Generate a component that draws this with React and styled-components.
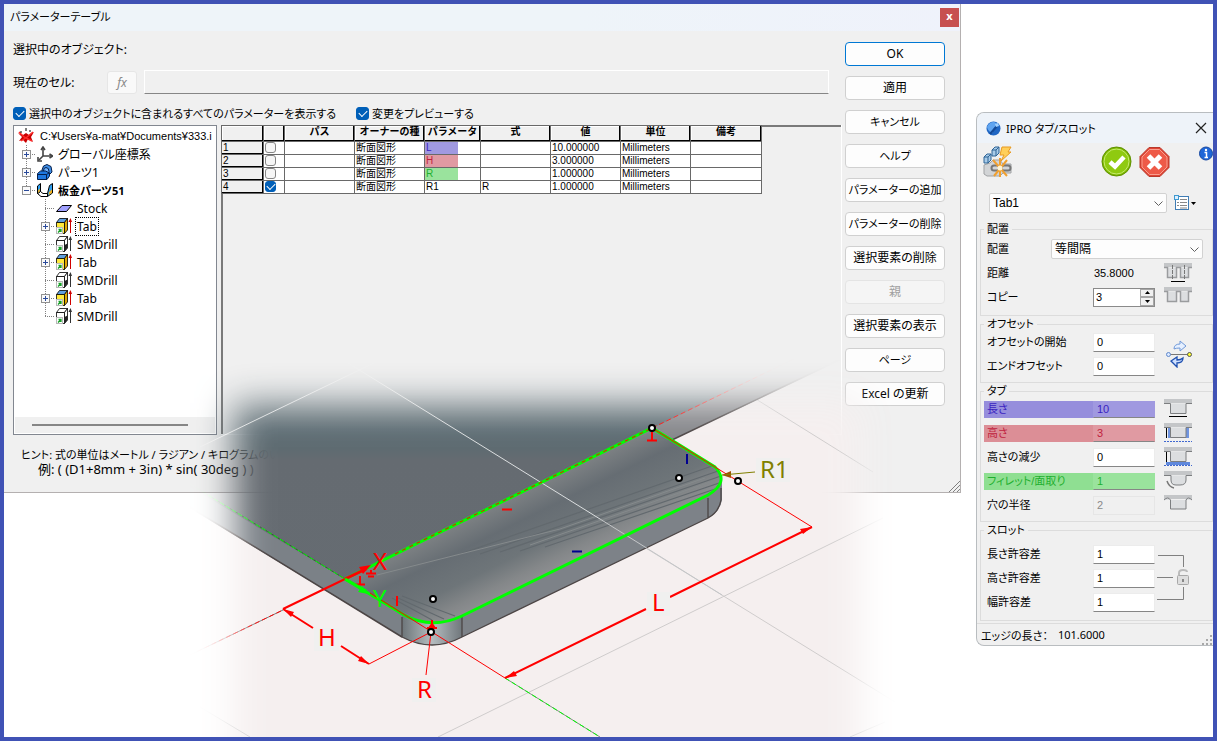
import React from 'react';
import styled, {createGlobalStyle} from 'styled-components';

const GlobalStyle = createGlobalStyle`
    * {
        box-sizing: border-box;
    }
    body {
        margin: 0;
        background: #fff;
        color: #000;
        font: 12px "Noto Sans", "Noto Sans CJK JP", sans-serif;
        font-feature-settings: "palt";
    }
    button, input, select {
        margin: 0;
        font: inherit;
        font-feature-settings: inherit;
        color: inherit;
    }
    svg {
        display: block;
        flex: none;
    }
`;

const Desktop = styled.main`
    position: relative;
    display: flex;
    align-items: flex-start;
    gap: 15px;
    min-height: 100vh;
    border: 4px solid #4052b5;
    overflow: hidden;
`;

/* Parameter table dialog */

const Dialog = styled.section`
    position: relative;
    flex: 1;
    min-width: 0;
    background: #f0f0f0;
    border: solid #b4b0b0;
    border-width: 0 1px 1px 0;
`;
const TitleBar = styled.header`
    display: flex;
    align-items: center;
    justify-content: space-between;
    height: 27px;
    padding: 0 1px 4px 6px;
    background: linear-gradient(90deg, #eef4f9 60%, #eff2fb);
`;
const Title = styled.h1`
    margin: 0;
    font-size: 11px;
    font-weight: 400;
`;
const CloseBox = styled.button`
    width: 19px;
    height: 19px;
    margin-top: 4px;
    padding: 0 0 3px;
    border: 0;
    background: #c75050;
    color: #fff;
    font-size: 11px;
    font-weight: 700;
    line-height: 14px;
`;
const DialogBody = styled.div`
    display: flex;
`;
const MainColumn = styled.div`
    flex: 1;
    min-width: 0;
    padding: 0 0 15px 9px;
`;
const Line = styled.div`
    display: flex;
    align-items: center;
    height: ${({$height}) => $height}px;
    padding-top: ${({$top}) => $top || 0}px;
`;
const CellLabel = styled.label`
    width: 94px;
`;
const FxButton = styled.button`
    width: 30px;
    height: 23px;
    margin-right: 7px;
    padding: 0;
    border: 1px solid #e6e6e6;
    border-radius: 3px;
    background: #f9f9f9;
    color: #8a8a8a;
    font-style: italic;
`;
const CellInput = styled.input`
    flex: 1;
    height: 24px;
    margin-right: 13px;
    border: 1px solid #fff;
    border-bottom-color: #868686;
    background: #f0f0f0;
`;
const CheckLabel = styled.label`
    display: flex;
    align-items: center;
    gap: 3px;
    font-size: 11px;
    &:first-child {
        width: 343px;
    }
`;
const Check = styled.input`
    appearance: none;
    display: grid;
    place-items: center;
    flex: none;
    width: ${({$size}) => $size || 13}px;
    height: ${({$size}) => $size || 13}px;
    border: 1px solid #868686;
    border-radius: 3px;
    background: #f6f6f6;
    &:checked {
        border-color: #005fb8;
        background: #005fb8;
    }
    &:checked::after {
        content: "";
        width: 7px;
        height: 4px;
        margin-bottom: 2px;
        border: solid #fff;
        border-width: 0 0 1px 1px;
        transform: rotate(-45deg);
    }
`;
const Panes = styled.div`
    display: flex;
    gap: 4px;
    height: 310px;
`;
const TreePane = styled.div`
    display: flex;
    flex-direction: column;
    width: 204px;
    padding: 1px;
    border: 1px solid #828790;
    background: #fff;
`;
const Tree = styled.ul`
    flex: 1;
    margin: 0;
    padding: 0;
    list-style: none;
    overflow: hidden;
`;
const TreeRow = styled.li`
    display: flex;
    align-items: center;
    height: 18px;
    padding-left: ${({$level}) => [2, 7, 26][$level]}px;
    font-family: ${({$level}) => $level === 0 ? '"Liberation Sans", sans-serif' : 'inherit'};
    font-weight: ${({$bold}) => $bold ? 700 : 400};
    font-size: ${({$bold, $level}) => $bold || $level === 0 ? 11 : 12}px;
    white-space: nowrap;
`;
const TreeText = styled.span`
    margin-left: 4px;
    padding: 0 1px;
    line-height: 17px;
    outline: ${({$focus}) => $focus ? '1px dotted #000' : 'none'};
`;
const Toggle = styled.button`
    padding: 0;
    border: 0;
    background: none;
`;
const ScrollTrack = styled.div`
    height: 16px;
    padding: 7px 27px 7px 17px;
    background: #f0f0f0;
`;
const ScrollThumb = styled.div`
    height: 2px;
    background: #868686;
`;
const SheetPane = styled.div`
    flex: 1;
    min-width: 0;
    border: solid #fff;
    border-width: 0 1px 1px 0;
    box-shadow: inset 2px 2px 0 #7a7a7a;
`;
const Sheet = styled.table`
    width: 540px;
    border-collapse: collapse;
    table-layout: fixed;
    font: 10px "Liberation Sans", "Noto Sans CJK JP", sans-serif;
    font-feature-settings: normal;
    line-height: 11px;
    th, td {
        height: 13px;
        padding: 0 1px;
        border: 1px solid #696969;
        overflow: hidden;
        white-space: nowrap;
        text-align: left;
        vertical-align: top;
        background: #fff;
        font-size: 10px;
    }
    thead th {
        height: 16px;
        padding: 0;
        text-align: center;
        font-weight: 700;
        background: #f0f0f0;
        box-shadow: inset -1px -1px 0 #000, inset 1px 1px 0 #fff;
    }
    tbody th {
        font-weight: 400;
        background: #f0f0f0;
        box-shadow: inset -1px -1px 0 #000;
    }
`;
const Mark = styled.span`
    display: block;
    width: 33px;
    height: 12px;
    margin-left: -1px;
    padding-left: 1px;
    color: ${({$tone}) => tones[$tone].text};
    background: ${({$tone}) => tones[$tone].fill};
`;
const Hint = styled.p`
    margin: 12px 0 0 8px;
    line-height: 15px;
    font-size: 11px;
    white-space: nowrap;
    span {
        display: block;
        padding-left: 17px;
        font-size: 13px;
    }
`;
const ButtonColumn = styled.div`
    display: flex;
    flex-direction: column;
    gap: 10px;
    width: 118px;
    padding: 11px 15px 0 3px;
`;
const PushButton = styled.button`
    height: 24px;
    padding: 0;
    border: 1px solid ${({$primary}) => $primary ? '#0078d4' : '#d0d0d0'};
    border-radius: 4px;
    background: #fdfdfd;
    font-size: ${({$small}) => $small ? 11 : 12}px;
    line-height: 20px;
    white-space: nowrap;
    &:disabled {
        background: #f5f5f5;
        border-color: #e4e4e4;
        color: #a0a0a0;
    }
`;
const Grip = styled.svg`
    position: absolute;
    right: 0;
    bottom: 0;
`;

/* Tab / slot panel */

const Panel = styled.section`
    position: relative;
    flex: none;
    width: 237px;
    margin-top: 108px;
    border: solid #b9bdc0;
    border-width: 1px 0 1px 1px;
    border-radius: 8px 0 0 8px;
    background: #f0f0f0;
    overflow: hidden;
    font-family: "Liberation Sans", "Noto Sans CJK JP", sans-serif;
`;
const PanelTitle = styled.header`
    display: flex;
    align-items: center;
    gap: 5px;
    height: 30px;
    padding: 0 6px 0 9px;
    background: #eef3f9;
    h1 {
        flex: 1;
        font-family: "Noto Sans", "Noto Sans CJK JP", sans-serif;
    }
`;
const IconButton = styled.button`
    padding: 0;
    border: 0;
    background: none;
`;
const ToolBar = styled.div`
    display: flex;
    align-items: flex-start;
    gap: 7px;
    height: 50px;
    padding: 3px 0 0 6px;
    > :first-child {
        margin-right: auto;
    }
    > :last-child {
        margin-left: 22px;
    }
`;
const SelectLine = styled.div`
    display: flex;
    align-items: center;
    gap: 7px;
    height: 20px;
    margin-bottom: 10px;
    padding: 0 16px 0 12px;
`;
const SelectBox = styled.div`
    position: relative;
    flex: 1;
    select {
        appearance: none;
        display: block;
        width: 100%;
        height: 20px;
        padding: 0 3px;
        border: 1px solid #d2d2d2;
        border-radius: 2px;
        background: #fdfdfd;
        line-height: 16px;
    }
    svg {
        position: absolute;
        right: 4px;
        top: 8px;
        pointer-events: none;
    }
`;
const Group = styled.fieldset`
    min-width: 0;
    margin: 0 0 2px 3px;
    padding: ${({$top}) => $top || 0}px 0 ${({$bottom}) => $bottom || 4}px 3px;
    border: 1px solid #dcdcdc;
    legend {
        padding: 0 3px;
        font-size: 11px;
        line-height: 12px;
    }
`;
const GroupBody = styled.div`
    display: flex;
    align-items: center;
`;
const FieldRow = styled.div`
    display: flex;
    align-items: center;
    height: 24px;
    padding-right: ${({$wide}) => $wide ? 9 : 0}px;
    > svg {
        margin-left: 9px;
    }
`;
const FieldLabel = styled.label`
    flex: none;
    width: ${({$wide}) => $wide ? 67 : 109}px;
    height: 17px;
    padding-left: 3px;
    font-size: 11px;
    line-height: 16px;
    white-space: nowrap;
    color: ${({$tone}) => $tone ? tones[$tone].text : '#000'};
    background: ${({$tone}) => $tone ? tones[$tone].label : 'none'};
`;
const NumberInput = styled.input`
    width: 62px;
    height: ${({$tone}) => $tone ? 17 : 19}px;
    padding: 0 3px;
    border: 1px solid ${({$tone}) => $tone ? tones[$tone].fill : '#ececec'};
    border-bottom-color: #868686;
    background: ${({$tone}) => $tone ? tones[$tone].fill : '#fff'};
    color: ${({$tone}) => $tone ? tones[$tone].text : '#000'};
    font-size: 11px;
    &:disabled {
        background: #f0f0f0;
        border-color: #e6e6e6;
        color: #8a8a8a;
    }
`;
const ReadOut = styled.output`
    width: 62px;
    padding-left: 1px;
    font-size: 11px;
`;
const Spinner = styled.div`
    display: flex;
    width: 62px;
    height: 19px;
    border: 1px solid #8a8a8a;
    background: #fff;
    input {
        flex: 1;
        min-width: 0;
        padding: 0 2px;
        border: 0;
        font-size: 11px;
    }
`;
const SpinButtons = styled.div`
    display: flex;
    flex-direction: column;
    width: 14px;
    button {
        display: grid;
        place-items: center;
        flex: 1;
        padding: 0;
        border: 1px solid #a6a6a6;
        background: #f0f0f0;
    }
`;
const StatusBar = styled.footer`
    display: flex;
    align-items: center;
    gap: 10px;
    height: 22px;
    padding-left: 4px;
    border-top: 1px solid #dcdcdc;
    font-size: 11px;
    font-family: "Noto Sans", "Noto Sans CJK JP", sans-serif;
`;

const Scene = styled.svg`
    position: absolute;
    left: -4px;
    top: -4px;
    pointer-events: none;
    text {
        font: 24px "Noto Sans", sans-serif;
    }
`;

const tones = {
    blue: {text: '#3a1fc0', label: '#968edc', fill: '#a099e0'},
    red: {text: '#c01f3f', label: '#dc8e96', fill: '#e09aa2'},
    green: {text: '#1fb02f', label: '#8fdf92', fill: '#9ae39d'}
};

const treeItems = [
    {level: 1, name: 'グローバル座標系', icon: 'axes', toggle: '+'},
    {level: 1, name: 'パーツ1', icon: 'part', toggle: '+'},
    {level: 1, name: '板金パーツ51', icon: 'sheet', toggle: '-', bold: true, last: true},
    {level: 2, name: 'Stock', icon: 'stock'},
    {level: 2, name: 'Tab', icon: 'tab', toggle: '+', focus: true},
    {level: 2, name: 'SMDrill', icon: 'drill'},
    {level: 2, name: 'Tab', icon: 'tab', toggle: '+'},
    {level: 2, name: 'SMDrill', icon: 'drill'},
    {level: 2, name: 'Tab', icon: 'tab', toggle: '+'},
    {level: 2, name: 'SMDrill', icon: 'drill', last: true}
];

const columns = [42, 21, 70, 70, 56, 70, 70, 70, 71];
const headings = ['', '', 'パス', 'オーナーの種', 'パラメータ', '式', '値', '単位', '備考'];
const parameters = [
    {name: 'L', tone: 'blue', formula: '', value: '10.000000'},
    {name: 'H', tone: 'red', formula: '', value: '3.000000'},
    {name: 'R', tone: 'green', formula: '', value: '1.000000'},
    {name: 'R1', formula: 'R', value: '1.000000', checked: true}
];

const buttons = [
    {name: 'OK', primary: true},
    {name: '適用'},
    {name: 'キャンセル', small: true},
    {name: 'ヘルプ', small: true},
    {name: 'パラメーターの追加', small: true},
    {name: 'パラメーターの削除', small: true},
    {name: '選択要素の削除'},
    {name: '親', disabled: true},
    {name: '選択要素の表示'},
    {name: 'ページ', small: true},
    {name: 'Excel の更新'}
];

const Branch = ({toggle, last}) => (
    <svg width="15" height="18">
        <path d={`M4.5 0V${last ? 9 : 18}M4 9.5H14`} stroke="#808080" strokeDasharray="1 1" fill="none"/>
        {toggle && <g>
            <rect x="0.5" y="5.5" width="8" height="8" fill="#fafafa" stroke="#919191"/>
            <path d={toggle === '+' ? 'M2 9.5H7M4.5 7V12' : 'M2 9.5H7'} stroke="#2a4a9a"/>
        </g>}
    </svg>
);

const Block = ({color}) => (
    <svg width="16" height="16">
        <path d="M0.5 4.5L3.5 0.5H11.5L8.5 4.5Z" fill={color ? '#5f9fe0' : '#fff'} stroke="#000" strokeWidth="0.8"/>
        <path d="M8.5 4.5L11.5 0.5V12L8.5 15.5Z" fill={color ? '#e0a800' : '#fff'} stroke="#000" strokeWidth="0.8"/>
        {!color && <path d="M8.5 9L11.5 7.5V12L8.5 15.5Z" fill="#222"/>}
        <path d="M0.5 4.5H8.5V15.5H0.5Z" fill={color ? '#ffe93c' : '#fff'} stroke="#000" strokeWidth="0.8"/>
        <rect x="0.5" y="9.5" width="6" height="6" fill="#fff" stroke="#b8b8b8"/>
        <path d="M2 14.5L5 11.5M2.5 11.5H5V14" stroke="#18a028" strokeWidth="1.3" fill="none"/>
        <path d="M14.5 3V15" stroke={color ? '#d00000' : '#333'}/>
        <path d="M12.5 4L14.5 0L16 4Z" fill={color ? '#d00000' : '#333'}/>
    </svg>
);

const TreeIcon = ({icon}) => {
    if (icon === 'tab') return <Block color/>;
    if (icon === 'drill') return <Block/>;
    return (
        <svg width="16" height="16">
            {icon === 'axes' && <g stroke="#444" strokeWidth="1.6" fill="none">
                <path d="M6 2V10H15M6 10L2 14"/>
                <path d="M4 4L6 1L8 4M12.5 8L15.5 10L12.5 12M1 11V15H5"/>
            </g>}
            {icon === 'part' && <g stroke="#041e4a" strokeLinejoin="round">
                <path d="M5 6L6.5 2L10 0.5L14 2.5L15 8L12 11L5 9Z" fill="#3f8fe8"/>
                <path d="M6.5 7Q6.5 3.5 9 3.5Q12 3.5 12 7.5V9H6.5Z" fill="#6fb2ff"/>
                <path d="M0.5 9.5L3.5 7H8.5L12.5 9V12L10 15.5H0.5Z" fill="#1f78e0"/>
                <path d="M0.5 10.5H9.5V15M9.5 10.5L12 9" fill="none"/>
            </g>}
            {icon === 'sheet' && <g strokeLinejoin="round">
                <path d="M3.5 9.5L6 11.5H10.5V14.5H4L0.5 11.5Z" fill="#fff" stroke="#000"/>
                <path d="M0.5 4L3.5 1.5V9.5L0.5 11.5Z" fill="#30a0f0" stroke="#000"/>
                <path d="M1 8.5L3 6.5V9L1 11Z" fill="#f0b020"/>
                <path d="M15.5 1.5L12.5 3.5L10.5 11.5V14.5L15.5 11Z" fill="#30a0f0" stroke="#000"/>
                <path d="M12 10L15 7.5V11L11.5 13Z" fill="#f0b020"/>
            </g>}
            {icon === 'stock' && <path d="M0.5 11.5L6 5.5H15.5L10.5 11.5Z" fill="#a0a0ff" stroke="#000"/>}
        </svg>
    );
};

const ParameterDialog = () => (
    <Dialog>
        <TitleBar>
            <Title>パラメーターテーブル</Title>
            <CloseBox type="button" aria-label="閉じる">x</CloseBox>
        </TitleBar>
        <DialogBody>
            <MainColumn>
                <Line $height={36}>選択中のオブジェクト:</Line>
                <Line $height={30}>
                    <CellLabel htmlFor="cell">現在のセル:</CellLabel>
                    <FxButton type="button">fx</FxButton>
                    <CellInput id="cell" type="text"/>
                </Line>
                <Line $height={28} $top={4}>
                    <CheckLabel>
                        <Check type="checkbox" defaultChecked/>
                        選択中のオブジェクトに含まれるすべてのパラメーターを表示する
                    </CheckLabel>
                    <CheckLabel>
                        <Check type="checkbox" defaultChecked/>
                        変更をプレビューする
                    </CheckLabel>
                </Line>
                <Panes>
                    <TreePane>
                        <Tree>
                            <TreeRow $level={0}>
                                <svg width="18" height="16">
                                    <path d="M1 5L6 7L9 5L12 7L17 4L14 9L16 14L11 11L9 15L6 12L2 13L5 9Z" fill="#c80000"/>
                                    <path d="M2 4L7 9L15 13M16 4L10 9L4 13" stroke="#ff2a2a" strokeWidth="1.5" fill="none"/>
                                    <path d="M4 3V5M9 0V3M13 2V4" stroke="#000"/>
                                </svg>
                                <TreeText>C:¥Users¥a-mat¥Documents¥333.i</TreeText>
                            </TreeRow>
                            {treeItems.map((item, i) => <TreeRow key={i} $level={item.level} $bold={item.bold}>
                                {item.toggle
                                    ? <Toggle type="button" aria-label={item.name}><Branch {...item}/></Toggle>
                                    : <Branch {...item}/>}
                                <TreeIcon icon={item.icon}/>
                                <TreeText $focus={item.focus}>{item.name}</TreeText>
                            </TreeRow>)}
                        </Tree>
                        <ScrollTrack><ScrollThumb/></ScrollTrack>
                    </TreePane>
                    <SheetPane>
                        <Sheet>
                            <colgroup>
                                {columns.map((width, i) => <col key={i} width={width}/>)}
                            </colgroup>
                            <thead>
                                <tr>{headings.map((name, i) => <th key={i}>{name}</th>)}</tr>
                            </thead>
                            <tbody>
                                {parameters.map((p, i) => <tr key={p.name}>
                                    <th>{i + 1}</th>
                                    <td><Check $size={11} type="checkbox" aria-label={p.name} defaultChecked={p.checked}/></td>
                                    <td/>
                                    <td>断面図形</td>
                                    <td>{p.tone ? <Mark $tone={p.tone}>{p.name}</Mark> : p.name}</td>
                                    <td>{p.formula}</td>
                                    <td>{p.value}</td>
                                    <td>Millimeters</td>
                                    <td/>
                                </tr>)}
                            </tbody>
                        </Sheet>
                    </SheetPane>
                </Panes>
                <Hint>
                    ヒント: 式の単位はメートル / ラジアン / キログラムのいずれかです
                    <span>例: ( (D1+8mm + 3in) * sin( 30deg ) )</span>
                </Hint>
            </MainColumn>
            <ButtonColumn>
                {buttons.map(b => <PushButton key={b.name} type="button" $primary={b.primary} $small={b.small} disabled={b.disabled}>
                    {b.name}
                </PushButton>)}
            </ButtonColumn>
        </DialogBody>
        <Grip width="12" height="12">
            <path d="M1 12L12 1M5 12L12 5M9 12L12 9" stroke="#808080"/>
        </Grip>
    </Dialog>
);

const Chevron = () => (
    <svg width="9" height="5"><path d="M0.5 0.5L4.5 4.5L8.5 0.5" stroke="#606060" fill="none"/></svg>
);

const TabIcon = ({kind}) => {
    const double = kind === 'distance' || kind === 'copy';
    return (
        <svg width="28" height="20">
            <rect width="28" height="4" fill="#c4c6c8"/>
            {double ? <g>
                <path d="M0 4.5H3.5V14.5H12.5V4.5H16.5V14.5H24.5V4.5H28" fill="#dcdee0" stroke="#9a9c9e" strokeWidth="1.5"/>
                {kind === 'distance' && <g stroke="#777">
                    <path d="M8.5 2V16M20.5 2V16" strokeDasharray="4 1"/>
                    <path d="M7 18.5H21" stroke="#000"/>
                </g>}
            </g> : <g>
                {kind === 'height' && <g>
                    <path d="M4 5H7V15H4ZM21 5H25V15H21Z" fill="#6f94e0"/>
                    <path d="M0 18.5H28" stroke="#4068d0" strokeDasharray="2 1"/>
                    <path d="M2.5 5V15" stroke="#000"/>
                </g>}
                {kind === 'reduce' && <path d="M2 15H26V18H2Z" fill="#5f88dc"/>}
                {kind === 'fillet'
                    ? <path d="M0 4.5H7V9Q7 14 12 14H16Q22 14 22 9V4.5H28" fill="#dcdee0" stroke="#7c7e80"/>
                    : <path d={kind === 'hole' ? 'M0 5Q4 1 6.5 5V14H22V5Q24 1 28 5' : 'M0 4.5H6.5V14.5H22V4.5H28'} fill="#dcdee0" stroke="#7c7e80"/>}
                {kind === 'length' && <path d="M5 17.5H23" stroke="#000"/>}
                {kind === 'reduce' && <g>
                    <path d="M2.5 5V15" stroke="#000"/>
                    <path d="M0 18.5H28" stroke="#4068d0" strokeDasharray="2 1"/>
                </g>}
                {kind === 'fillet' && <path d="M3 10Q5 16 10 17" stroke="#777" strokeWidth="1.5" fill="none"/>}
            </g>}
        </svg>
    );
};

const NumberField = ({id, label, value, tone, disabled, icon}) => (
    <FieldRow>
        <FieldLabel htmlFor={id} $tone={tone}>{label}</FieldLabel>
        <NumberInput id={id} type="text" defaultValue={value} $tone={tone} disabled={disabled}/>
        {icon && <TabIcon kind={icon}/>}
    </FieldRow>
);

const SlotPanel = () => (
    <Panel>
        <PanelTitle>
            <svg width="15" height="15">
                <circle cx="7.5" cy="7.5" r="7" fill="#1f66c4"/>
                <path d="M1 6Q3 1 8 1Q12 2 10 5Q6 8 7 12Q2 11 1 6Z" fill="#5fa4f0"/>
                <path d="M4 13L11 5" stroke="#134a98" strokeWidth="2"/>
                <path d="M9 3L12 2L13 5L10 6Z" fill="#9fd0ff"/>
            </svg>
            <Title>IPRO タブ/スロット</Title>
            <IconButton type="button" aria-label="閉じる">
                <svg width="12" height="12"><path d="M1 1L11 11M11 1L1 11" stroke="#222" strokeWidth="1.2"/></svg>
            </IconButton>
        </PanelTitle>
        <ToolBar>
            <svg width="30" height="32">
                <path d="M1 19L7 17L10 14H17L20 18H28V27H20L17 30H4L1 28Z" fill="#d2d4d6" stroke="#a0a2a4"/>
                <path d="M1 11L4 8H8V14L5 17H1ZM9 4L12 1H16V7L13 10H9Z" fill="#a8cbe8" stroke="#2f6496"/>
                <path d="M1 11H5L8 8M5 11V17M9 4H13L16 1M13 4V10" stroke="#2f6496" fill="none"/>
                <path d="M19 1H28L25 6H28L18 15L21 9H17Z" fill="#ffcf5a" stroke="#e89a20"/>
                <rect x="8.5" y="19.5" width="8" height="5" rx="2.5" fill="none" stroke="#777" strokeWidth="2"/>
                <rect x="18.5" y="19.5" width="9" height="5" rx="2.5" fill="none" stroke="#777" strokeWidth="2"/>
                <path d="M17 12V31M10 14L24 30M24 14L11 30" stroke="#f0a030" strokeWidth="2"/>
                <circle cx="17" cy="22" r="2.5" fill="#fff3d0"/>
            </svg>
            <IconButton type="button" aria-label="OK">
                <svg width="31" height="32">
                    <circle cx="15.5" cy="15.5" r="14.5" fill="#7db800" stroke="#5f9000"/>
                    <circle cx="15.5" cy="15.5" r="12.5" fill="#8fca10" stroke="#c8ec70"/>
                    <path d="M9 16L14 20.5L23 11" stroke="#fff" strokeWidth="4.5" fill="none"/>
                </svg>
            </IconButton>
            <IconButton type="button" aria-label="キャンセル">
                <svg width="31" height="32">
                    <path d="M10 1.5H21L30 10.5V21.5L21 30.5H10L1 21.5V10.5Z" fill="#e04434" stroke="#b83a2c"/>
                    <path d="M10.5 3.5H20.5L28 11V21L20.5 28.5H10.5L3 21V11Z" fill="#ee5a48" stroke="#f8a090"/>
                    <path d="M9.5 10L21.5 22M21.5 10L9.5 22" stroke="#fff" strokeWidth="5"/>
                </svg>
            </IconButton>
            <IconButton type="button" aria-label="情報">
                <svg width="14" height="15">
                    <circle cx="7" cy="7.5" r="6.5" fill="#1e66d8" stroke="#1748a0"/>
                    <path d="M5.5 6.5H7.5V11M5.5 11.5H9" stroke="#fff" strokeWidth="1.5" fill="none"/>
                    <circle cx="7" cy="4" r="1.2" fill="#fff"/>
                </svg>
            </IconButton>
        </ToolBar>
        <SelectLine>
            <SelectBox>
                <select aria-label="フィーチャー"><option>Tab1</option></select>
                <Chevron/>
            </SelectBox>
            <IconButton type="button" aria-label="リスト">
                <svg width="23" height="16">
                    <rect x="1.5" y="1.5" width="13" height="13" fill="#fff" stroke="#3f7cb4"/>
                    <path d="M6 4.5H13M6 7.5H13M6 10.5H13M6 13H13M3 7.5H5M3 10.5H5" stroke="#888"/>
                    <rect x="0.5" y="0.5" width="4" height="4" fill="#dff0ff" stroke="#3f9ad0"/>
                    <path d="M17 7H22L19.5 10Z" fill="#000"/>
                </svg>
            </IconButton>
        </SelectLine>
        <Group $top={2} $bottom={6}>
            <legend>配置</legend>
            <FieldRow $wide>
                <FieldLabel htmlFor="layout" $wide>配置</FieldLabel>
                <SelectBox>
                    <select id="layout"><option>等間隔</option></select>
                    <Chevron/>
                </SelectBox>
            </FieldRow>
            <FieldRow>
                <FieldLabel as="span">距離</FieldLabel>
                <ReadOut>35.8000</ReadOut>
                <TabIcon kind="distance"/>
            </FieldRow>
            <FieldRow>
                <FieldLabel htmlFor="copies">コピー</FieldLabel>
                <Spinner>
                    <input id="copies" type="text" defaultValue="3"/>
                    <SpinButtons>
                        <button type="button" aria-label="増やす"><svg width="5" height="3"><path d="M0 3L2.5 0L5 3Z"/></svg></button>
                        <button type="button" aria-label="減らす"><svg width="5" height="3"><path d="M0 0L2.5 3L5 0Z"/></svg></button>
                    </SpinButtons>
                </Spinner>
                <TabIcon kind="copy"/>
            </FieldRow>
        </Group>
        <Group>
            <legend>オフセット</legend>
            <GroupBody>
                <div>
                    <NumberField id="offset-start" label="オフセットの開始" value="0"/>
                    <NumberField id="offset-end" label="エンドオフセット" value="0"/>
                </div>
                <svg width="38" height="28">
                    <path d="M12 14.5H36" stroke="#777"/>
                    <path d="M19 9Q19 4 25 4V1L31 6L25 11V8Q21 8 19 9Z" fill="#e6f0ff" stroke="#6f98d8"/>
                    <path d="M28 18Q28 23 22 23V27L16 21L22 17V20Q26 20 28 18Z" fill="#cfe0ff" stroke="#1f50b0" strokeWidth="1.3"/>
                    <circle cx="13.5" cy="14.5" r="2" fill="#dbe9ff" stroke="#5f88cc"/>
                    <circle cx="34.5" cy="14.5" r="2" fill="#ffff30" stroke="#555"/>
                </svg>
            </GroupBody>
        </Group>
        <Group>
            <legend>タブ</legend>
            <NumberField id="tab-length" label="長さ" value="10" tone="blue" icon="length"/>
            <NumberField id="tab-height" label="高さ" value="3" tone="red" icon="height"/>
            <NumberField id="tab-reduce" label="高さの減少" value="0" icon="reduce"/>
            <NumberField id="tab-fillet" label="フィレット/面取り" value="1" tone="green" icon="fillet"/>
            <NumberField id="tab-hole" label="穴の半径" value="2" disabled icon="hole"/>
        </Group>
        <Group $top={6} $bottom={6}>
            <legend>スロット</legend>
            <GroupBody>
                <div>
                    <NumberField id="slot-length" label="長さ許容差" value="1"/>
                    <NumberField id="slot-height" label="高さ許容差" value="1"/>
                    <NumberField id="slot-width" label="幅許容差" value="1"/>
                </div>
                <svg width="38" height="72">
                    <path d="M3 13.5H28.5V25M2 35.5H18M2 57.5H28.5V45" stroke="#808080" fill="none"/>
                    <path d="M24 33V31Q24 28 28 28Q32 28 32 30" stroke="#bbb" strokeWidth="2" fill="none"/>
                    <rect x="22.5" y="33.5" width="11" height="9" rx="1" fill="#dedede" stroke="#a8a8a8"/>
                    <path d="M28 37V40" stroke="#888" strokeWidth="2"/>
                </svg>
            </GroupBody>
        </Group>
        <StatusBar>
            <span>エッジの長さ：</span>
            <span>101.6000</span>
        </StatusBar>
        <Grip width="12" height="12">
            <path d="M9 2H11V4H9ZM5 6H7V8H5ZM9 6H11V8H9ZM1 10H3V12H1ZM5 10H7V12H5ZM9 10H11V12H9Z" fill="#a8a8a8"/>
        </Grip>
    </Panel>
);

const TabScene = () => (
    <Scene width="1217" height="737" viewBox="0 0 1217 737">
        <defs>
            <filter id="soft" x="-20%" y="-30%" width="140%" height="160%">
                <feGaussianBlur stdDeviation="18"/>
            </filter>
            <mask id="fade" maskUnits="userSpaceOnUse" x="0" y="300" width="1217" height="437">
                <rect x="234" y="403" width="626" height="380" fill="#fff" filter="url(#soft)"/>
            </mask>
            <linearGradient id="plate" x1="0" y1="350" x2="0" y2="640" gradientUnits="userSpaceOnUse">
                <stop offset="0" stopColor="#8f9a9e"/>
                <stop offset="0.28" stopColor="#5e6d74"/>
                <stop offset="0.34" stopColor="#5e6b71"/>
                <stop offset="0.38" stopColor="#656b71"/>
                <stop offset="1" stopColor="#666c72"/>
            </linearGradient>
            <linearGradient id="face" x1="500" y1="500" x2="556" y2="614" gradientUnits="userSpaceOnUse">
                <stop offset="0" stopColor="#7f8385"/>
                <stop offset="0.22" stopColor="#666d73"/>
                <stop offset="0.45" stopColor="#6e7579"/>
                <stop offset="0.6" stopColor="#848789"/>
                <stop offset="0.8" stopColor="#98989b"/>
                <stop offset="1" stopColor="#7f8488"/>
            </linearGradient>
            <linearGradient id="corner">
                <stop offset="0" stopColor="#6d7579"/>
                <stop offset="0.5" stopColor="#b4bcbf"/>
                <stop offset="1" stopColor="#70777c"/>
            </linearGradient>
        </defs>
        <g mask="url(#fade)">
            <rect x="100" y="300" width="900" height="437" fill="#f5efef"/>
            <path d="M883 518L438 737M885 722L850 737M200 707L250 737M690 358L873 472M560 495L895 702" stroke="#cfcccc" fill="none"/>
            <path d="M100 300H900V332L672 440L652 428L345 579L402 637L180 501L100 455Z" fill="url(#plate)"/>
            <path d="M652 428L860 326V349L672 440Z" fill="#85868a"/>
            <path d="M160 469L345 579L402 612L410 622L402 637L160 490Z" fill="#7b8187"/>
            <path d="M160 489L402 637M672 440L860 350" stroke="#4c4545" strokeWidth="1.5" fill="none"/>
            <path d="M462 615L708 495Q722 488 722 478V500Q720 512 708 518L462 637Z" fill="#7d8288"/>
            <path d="M402 612L462 612V637Q432 653 402 637Z" fill="url(#corner)"/>
            <path d="M345 579L652 428L715 467Q730 482 708 495L467 615Q432 632 402 614Z" fill="url(#face)"/>
            <g stroke="#62696e" strokeWidth="1.2" fill="none">
                <path d="M460 554L712 466M480 554L718 471M500 552L721 476M520 551L722 482M545 547L718 488"/>
                <path d="M398 598L444 619M392 598L432 620M402 596L455 616"/>
            </g>
            <path d="M377 575L560 529L705 478M530 545L716 480" stroke="#858a8c" fill="none"/>
            <path d="M402 617V637Q432 653 462 637L708 518Q719 512 721 500V488M462 617V637M708 498V518" stroke="#4c4545" strokeWidth="1.3" fill="none"/>
            <path d="M200 447L380 360M340 358L600 519" stroke="#dcdfe0"/>
            <path d="M600 519L722 595" stroke="#c4c6c8"/>
            <path d="M190 484L345 579" stroke="#3c4a3c"/>
            <path d="M190 484L345 579" stroke="#0f0" strokeDasharray="5 2"/>
            <path d="M190 655L283 610M652 428L810 351" stroke="#777"/>
            <path d="M190 655L283 610M652 428L810 351" stroke="#f00" strokeDasharray="5 3"/>
            <path d="M505 678L600 737" stroke="#888"/>
            <path d="M505 678L600 737" stroke="#0f0" strokeDasharray="5 3"/>
        </g>
        <path d="M345 579L652 428L715 467Q730 482 708 495L462 616Q432 630 404 615Z" stroke="#0f0" strokeWidth="3" fill="none"/>
        <g stroke="#f00" fill="none">
            <path d="M395 554L652 428" strokeDasharray="4 4"/>
            <path d="M652 428L812 527M369 664L431 632L426 675M370 593L505 678"/>
            <path d="M283 609L345 579" strokeWidth="2"/>
            <path d="M345 579L366 569" strokeWidth="3"/>
            <path d="M283 609L313 628M341 646L369 664M812 527L670 597M646 609L505 678" strokeWidth="2"/>
            <path d="M652 432V440M647 440.5H657M360 576V584M355 584.5H365M502 509.5H512M397 596V606M366 573.5H376M368 576.5H374M371 570V573M432 620V628M427 628H437" strokeWidth="2"/>
        </g>
        <g fill="#f00">
            <path d="M283 609L294 612L291 617ZM369 664L358 661L361 656ZM505 678L514 671L517 676ZM812 527L800 529L803 534ZM371 565L359 567L363 574ZM432 622L428 628H436Z"/>
            <path d="M722 475L731 471V478Z" fill="#a05000"/>
        </g>
        <path d="M722 475L755 472" stroke="#808000"/>
        <path d="M345 579L366 591" stroke="#0f0" strokeWidth="3"/>
        <path d="M368 594L358 592L362 586Z" fill="#0f0"/>
        <path d="M687 454V464M572 551.5H582" stroke="#000090" strokeWidth="2"/>
        <g fill="#fff" stroke="#000" strokeWidth="2">
            <circle cx="652" cy="428" r="3"/>
            <circle cx="679" cy="478" r="3"/>
            <circle cx="738" cy="481" r="3"/>
            <circle cx="433" cy="599" r="3"/>
            <circle cx="431" cy="632" r="3"/>
        </g>
        <g fill="#f0f0ef">
            <rect x="314" y="628" width="25" height="23"/>
            <rect x="412" y="678" width="24" height="24"/>
            <rect x="647" y="592" width="23" height="24"/>
            <rect x="756" y="458" width="34" height="24"/>
        </g>
        <g fill="#f00">
            <text x="318" y="646">H</text>
            <text x="417" y="698">R</text>
            <text x="652" y="611">L</text>
            <text x="373" y="570">X</text>
            <text x="373" y="607" fill="#0f0">Y</text>
            <text x="760" y="478" fill="#808000">R1</text>
        </g>
    </Scene>
);

const App = () => (
    <Desktop>
        <GlobalStyle/>
        <ParameterDialog/>
        <SlotPanel/>
        <TabScene/>
    </Desktop>
);

export default App;
